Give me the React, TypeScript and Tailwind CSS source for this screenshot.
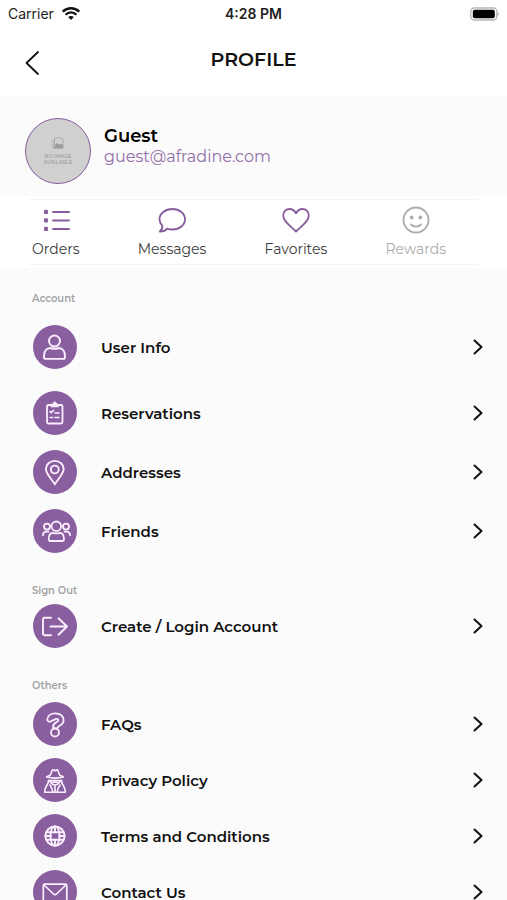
import type { ReactNode } from 'react';

const stroke = {
  fill: 'none',
  stroke: 'currentColor',
  strokeLinecap: 'round' as const,
  strokeLinejoin: 'round' as const,
  'aria-hidden': true,
};

const UserIcon = () => (
  <svg {...stroke} className="size-11" viewBox="0 0 44 44" strokeWidth="1.9">
    <circle cx="21.500" cy="16" r="5.500" />
    <path d="M11 32c-.3-6 2.500-9 6.500-9 2.500 1 5.500 1 8 0 4 0 6.800 3 6.500 9 0 1.200-.7 1.900-1.900 1.900H12.900c-1.200 0-1.900-.7-1.900-1.900z" />
  </svg>
);

const ClipboardIcon = () => (
  <svg {...stroke} className="size-11" viewBox="0 0 44 44" strokeWidth="1.8">
    <rect x="14" y="14" width="15.500" height="18.500" rx="1.500" />
    <path d="M18 13.500v2.300h7.500v-2.300l-2-.5c0-2.700-3.500-2.700-3.500 0z" fill="currentColor" strokeWidth="1" />
    <path d="m17 20.500 1.300 1.300 2.200-2.500M17 26.500h2.500M22 22h4M22 26.500h4" strokeWidth="1.600" />
  </svg>
);

const PinIcon = () => (
  <svg {...stroke} className="size-11" viewBox="0 0 44 44" strokeWidth="1.9">
    <path d="M21.800 34.300c-2.600-4.400-8.900-10.800-8.900-15.400a8.900 8 0 0 1 17.800 0c0 4.600-6.300 11-8.900 15.400z" />
    <circle cx="21.800" cy="19.500" r="3.900" />
  </svg>
);

const FriendsIcon = () => (
  <svg {...stroke} className="size-11" viewBox="0 0 44 44" strokeWidth="1.800">
    <circle cx="23.300" cy="17.300" r="4.800" />
    <circle cx="14" cy="17.600" r="3" />
    <circle cx="33" cy="17.600" r="3" />
    <path d="M15.700 30.500c0-4.500 1.300-6.500 4-6.700 2.300.8 5 .8 7.300 0 2.700.2 4 2.200 4 6.700 0 1-.5 1.500-1.500 1.500H17.200c-1 0-1.500-.5-1.500-1.500zM10 26.300c0-2.500 1-3.600 3.500-3.600h2M37 26.300c0-2.500-1-3.600-3.500-3.600h-2" />
  </svg>
);

const ExitIcon = () => (
  <svg {...stroke} className="size-11" viewBox="0 0 44 44" strokeWidth="1.9">
    <path d="M18 13.700h-6.500c-1 0-1.500.5-1.500 1.500v14.500c0 1 .5 1.500 1.500 1.500H18M17.500 22.500H34M25.500 14.300l8.500 8.200-8.500 8.200" />
  </svg>
);

const QuestionIcon = () => (
  <svg {...stroke} className="size-11" viewBox="0 0 44 44" strokeWidth="1.8">
    <path d="M18.500 19c-2 1.500-4.400.3-4.200-1.700.3-3.800 3.700-6 8-6 4.900 0 8.300 2.800 8.300 6.800 0 3-1.800 4.600-4 5.600-1.200.6-1.700 1-1.900 2-.9 1.200-4.400 1-4.700-.7 0-2.500 1.500-3.800 3.500-4.900 1.600-.8 2-1.300 1.900-2-.2-1.300-2.300-1.500-3.300-.7z" />
    <circle cx="22" cy="30.500" r="4" />
  </svg>
);

const SpyIcon = () => (
  <svg {...stroke} className="size-11" viewBox="0 0 44 44" strokeWidth="1.600">
    <path d="M13.500 19c1.500-1.200 3-1.600 3.800-1.800l1.700-4.500c.5-1.500 1.800-.6 3 0 1.200-.6 2.500-1.500 3 0l1.700 4.500c.8.200 2.300.6 3.800 1.800-5 1.300-12 1.300-17 0z" />
    <path d="M15.500 22.500h13l-3 2.200-3.500-.7-3.500.7zM18 25c1 1.300 2.300 2 4 2s3-.7 4-2" />
    <path d="M15.500 22.500c.2 1.500-.5 3-1.500 4.500-1.500 2.200-2.300 4.500-2.300 7.200h20.600c0-2.700-.8-5-2.300-7.200-1-1.500-1.700-3-1.500-4.500M17 27c1.500 2.200 2.500 4.500 2.800 7M27 27c-1.500 2.200-2.500 4.500-2.800 7M22 27.500V34" />
  </svg>
);

const GlobeIcon = () => (
  <svg {...stroke} className="size-11" viewBox="0 0 44 44" strokeWidth="1.900">
    <circle cx="22" cy="22" r="9.600" />
    <ellipse cx="22" cy="22" rx="4.600" ry="9.600" />
    <path d="M22 12.400V18.500M22 25.500v6.100M12.400 22H18M26 22h5.600M14 18.200h16M14 25.800h16" />
  </svg>
);

const MailIcon = () => (
  <svg {...stroke} className="size-11" viewBox="0 0 44 44" strokeWidth="1.700">
    <rect x="10.300" y="14.200" width="23.500" height="17" rx="1.500" />
    <path d="m11 15 9.500 9c1 1 2 1 3 0l9.500-9" />
  </svg>
);

type Item = { label: string; icon: ReactNode };

const account: Item[] = [
  { label: 'Reservations', icon: <ClipboardIcon /> },
  { label: 'Addresses', icon: <PinIcon /> },
  { label: 'Friends', icon: <FriendsIcon /> },
];

const others: Item[] = [
  { label: 'FAQs', icon: <QuestionIcon /> },
  { label: 'Privacy Policy', icon: <SpyIcon /> },
  { label: 'Terms and Conditions', icon: <GlobeIcon /> },
  { label: 'Contact Us', icon: <MailIcon /> },
];

function Row({ label, icon }: Item) {
  return (
    <button type="button" className="flex w-full items-center pr-6 pl-[33px] text-left">
      <span className="size-11 shrink-0 rounded-full bg-[#8a5f9f] text-[#fbeeff]">{icon}</span>
      <span className="ml-6 flex-1 text-[15px] leading-none font-semibold text-[#111]">{label}</span>
      <svg {...stroke} className="h-4 w-[10px]" viewBox="0 0 10 16" stroke="#111" strokeWidth="2">
        <path d="m1.500 1.500 7 6.500-7 6.500" />
      </svg>
    </button>
  );
}

function Heading({ children }: { children: ReactNode }) {
  return <h2 className="pl-8 text-[10px] leading-3 font-semibold text-[#a3a3a3]">{children}</h2>;
}

function Tab({ label, children, muted = false }: { label: string; children: ReactNode; muted?: boolean }) {
  return (
    <button
      type="button"
      disabled={muted}
      className={
        muted
          ? 'flex flex-col items-center gap-[5px] text-[#ababab]'
          : 'flex flex-col items-center gap-[5px] text-[#865c9e]'
      }
    >
      <svg {...stroke} className="size-7" viewBox="0 0 28 28" strokeWidth="1.8">
        {children}
      </svg>
      <span className={muted ? 'text-sm leading-5' : 'text-sm leading-5 text-[#3b3b3b]'}>{label}</span>
    </button>
  );
}

export default function App() {
  return (
    <div className="flex h-screen flex-col overflow-hidden bg-[#fbfbfb] font-['Montserrat','Inter',sans-serif]">
      <div className="grid h-7 shrink-0 grid-cols-3 items-center bg-white px-2 font-['Inter',sans-serif] text-sm text-[#222]">
        <div className="flex items-center gap-2">
          <span>Carrier</span>
          <svg className="h-[14px] w-[18px]" viewBox="0 0 18 14" fill="none" stroke="#111" aria-label="Wi-Fi">
            <path d="M.8 4.700c4.600-4.600 11.800-4.600 16.400 0M3.600 7.700c3-3 7.800-3 10.800 0" strokeWidth="2.300" />
            <path d="M9 13 6.200 10.100c1.500-1.500 4.100-1.500 5.600 0z" fill="#111" stroke="none" />
          </svg>
        </div>
        <span className="text-center font-semibold">4:28 PM</span>
        <svg className="h-[15px] w-[30px] justify-self-end" viewBox="0 0 30 15" aria-label="Battery full">
          <rect x="1.800" y="1" width="26" height="12" rx="3.500" fill="#fff" stroke="#b5b5b5" strokeWidth="1.300" />
          <rect x="3.800" y="2.700" width="22" height="8.600" rx="2" fill="#000" />
          <path d="M28.700 5c1.500.6 1.500 3.400 0 4z" fill="#b5b5b5" />
        </svg>
      </div>

      <header className="grid h-[67px] shrink-0 grid-cols-3 items-start bg-white px-6">
        <button type="button" aria-label="Back" className="mt-[22px] w-4">
          <svg {...stroke} className="h-[26px] w-4" viewBox="0 0 16 26" stroke="#111" strokeWidth="1.800">
            <path d="M14 2 2.500 13 14 24" />
          </svg>
        </button>
        <h1 className="mt-[18px] text-center text-[19px] leading-7 font-semibold text-[#111]">PROFILE</h1>
      </header>

      <section className="flex shrink-0 items-start gap-[13px] pt-[23px] pb-3 pl-[25px]">
        <div className="flex size-[66px] shrink-0 flex-col items-center rounded-full border border-[#865c9e] bg-[#d0d0d0] pt-[18px]">
          <svg className="h-3 w-3" viewBox="0 0 12 12" fill="none" stroke="#aaa" aria-hidden="true">
            <path d="M2.500 1h6.500l2 2v8h-8.500z" />
            <path d="M3 8.500 5 6l2 2 2-1 2 1.500V11H3z" fill="#999" />
            <path d="M1 3v8.500h9" />
          </svg>
          <p className="mt-1 text-center text-[5px] leading-[6px] font-medium text-[#999]">
            NO IMAGE
            <br />
            AVAILABLE
          </p>
        </div>
        <div className="pt-[7px]">
          <p className="text-lg leading-[22px] font-semibold text-black">Guest</p>
          <p className="text-base leading-5 text-[#9270a8]">guest@afradine.com</p>
        </div>
      </section>

      <nav className="shrink-0 bg-white py-[3px]">
        <div className="mx-7 flex justify-between border-y border-[#f5f5f5] pt-[6px] pr-[33px] pb-[5px] pl-1">
          <Tab label="Orders">
            <path d="M11 6h16M11 14.500h16M11 23h16" />
            <path d="M3 4.700h2v2.500H3zM3 13.200h2v2.500H3zM3 21.700h2v2.500H3z" fill="currentColor" />
          </Tab>
          <Tab label="Messages">
            <path d="M14.500 3C21.500 3 27 7.500 27 13.200s-5.500 10.300-12.500 10.300c-1.900 0-3.600-.3-5.200-.9-1.700 1.900-4.300 3-7.500 2.900 2-1.600 3-3.700 2.500-5.700C2.700 18 1.500 15.700 1.500 13.200 1.500 7.500 7.200 3 14.500 3z" />
          </Tab>
          <Tab label="Favorites">
            <path d="M14 25.500C8.500 20 1.200 15.500 1.200 9.500c0-4 3-6.500 6.300-6.500 3 0 5.200 1.700 6.500 4.300C15.300 4.700 17.500 3 20.500 3c3.300 0 6.300 2.500 6.300 6.500 0 6-7.300 10.500-12.800 16z" />
          </Tab>
          <Tab label="Rewards" muted>
            <circle cx="14" cy="14" r="12.500" />
            <path d="M9 18.500c2.800 2.700 7.200 2.700 10 0" />
            <circle cx="9.700" cy="11.500" r="1" fill="currentColor" />
            <circle cx="18.300" cy="11.500" r="1" fill="currentColor" />
          </Tab>
        </div>
      </nav>

      <main className="min-h-0 flex-1 overflow-y-auto pt-[25px] pb-6 [scrollbar-width:none]">
        <section>
          <Heading>Account</Heading>
          <div className="mt-5">
            <Row label="User Info" icon={<UserIcon />} />
          </div>
          <div className="mt-[22px] flex flex-col gap-[15px]">
            {account.map((item) => (
              <Row key={item.label} {...item} />
            ))}
          </div>
        </section>
        <section className="mt-8">
          <Heading>Sign Out</Heading>
          <div className="mt-[7px]">
            <Row label="Create / Login Account" icon={<ExitIcon />} />
          </div>
        </section>
        <section className="mt-8">
          <Heading>Others</Heading>
          <div className="mt-[10px] flex flex-col gap-3">
            {others.map((item) => (
              <Row key={item.label} {...item} />
            ))}
          </div>
        </section>
      </main>
    </div>
  );
}
